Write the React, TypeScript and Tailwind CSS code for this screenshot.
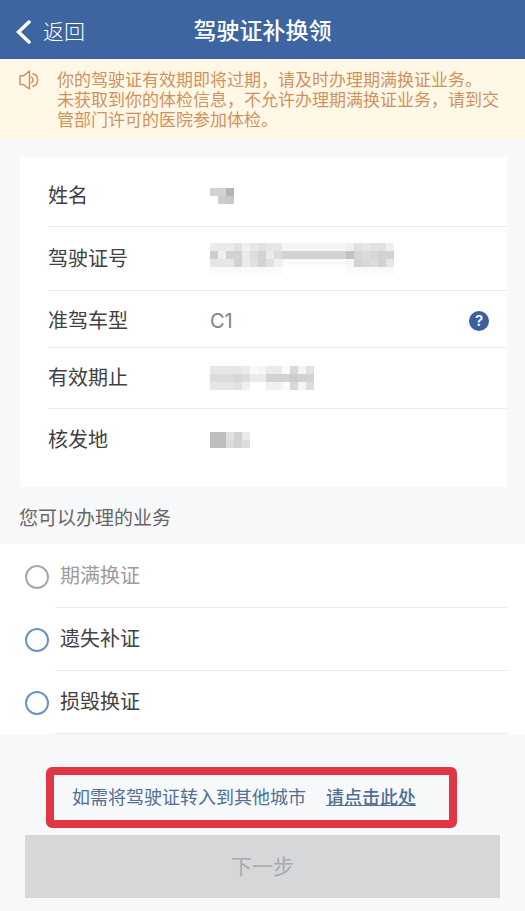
import { useState } from 'react';

type Field = {
  label: string;
  value?: string;
  mask?: string[];
  help?: boolean;
  rowClass: string;
};

type Service = {
  id: string;
  label: string;
  disabled?: boolean;
};

// each character of a mask is one mosaic cell, 0 (white) to f (darkest)
const fields: Field[] = [
  { label: '姓名', mask: ['99f', '0ab'], rowClass: 'h-[70px] pt-2 border-b' },
  {
    label: '驾驶证号',
    mask: [
      '44463565522222222365663',
      'a3994794799999999c87899',
      '55594696311111111298795',
      '11111111100000000111111'
    ],
    rowClass: 'h-16 border-b'
  },
  { label: '准驾车型', value: 'C1', help: true, rowClass: 'h-[57px] pt-1 border-b' },
  { label: '有效期止', mask: ['5555412441826', '7778744999a99', '5556300331827'], rowClass: 'h-[61px] border-b' },
  { label: '核发地', mask: ['dd694', 'dd797'], rowClass: 'h-[61px]' }
];

const services: Service[] = [
  { id: 'expired', label: '期满换证', disabled: true },
  { id: 'lost', label: '遗失补证' },
  { id: 'damaged', label: '损毁换证' }
];

const notice = `你的驾驶证有效期即将过期，请及时办理期满换证业务。
未获取到你的体检信息，不允许办理期满换证业务，请到交管部门许可的医院参加体检。`;

function MaskedValue({ rows }: { rows: string[] }) {
  const columns = rows[0].length;

  return (
    <svg
      aria-hidden="true"
      height={rows.length * 8}
      shapeRendering="crispEdges"
      viewBox={`0 0 ${columns} ${rows.length}`}
      width={columns * 8}
    >
      {rows.map((row, y) =>
        row.split('').map((cell, x) => {
          const shade = 255 - parseInt(cell, 16) * 5;
          return <rect fill={`rgb(${shade},${shade},${shade})`} height="1" key={`${x}-${y}`} width="1" x={x} y={y} />;
        })
      )}
    </svg>
  );
}

function SpeakerIcon() {
  return (
    <svg
      aria-hidden="true"
      className="h-5 w-5 shrink-0"
      fill="none"
      stroke="#cf925f"
      strokeLinejoin="round"
      strokeWidth="1.5"
      viewBox="0 0 20 20"
    >
      <path d="M1 5.8h3.5L10.5 1v18L4.5 14.600H1z" />
      <path d="M12.500 7.200c2 1.200 2 4.400 0 5.600" strokeLinecap="round" />
      <path d="M14 3.800c6.200 1.800 6.200 10.600 0 12.400" strokeLinecap="round" />
    </svg>
  );
}

export default function App() {
  const [selected, setSelected] = useState('');

  return (
    <main className="min-h-screen bg-[#f7f8fa] pb-3 font-['Inter','Noto_Sans_CJK_SC',sans-serif] text-[#414141]">
      <header className="grid h-[59px] grid-cols-[1fr_auto_1fr] items-center bg-[#3c65a2] pt-1 text-white">
        <button className="flex items-center gap-3 pl-4 text-[21px] font-light" type="button">
          <svg aria-hidden="true" className="h-6 w-[15px]" fill="none" viewBox="0 0 15 24">
            <path d="M13 2 2.500 12 13 22" stroke="currentColor" strokeLinecap="round" strokeWidth="3.500" />
          </svg>
          返回
        </button>
        <h1 className="text-[23px] font-medium">驾驶证补换领</h1>
      </header>

      <div className="flex gap-[18px] bg-[#fff8e6] pt-[11px] pr-5 pb-[10px] pl-[19px] text-[17px] leading-5 text-[#cf925f]">
        <SpeakerIcon />
        <p className="whitespace-pre-line">{notice}</p>
      </div>

      <dl className="mt-[17px] mr-[18px] ml-5 bg-white pb-[17px] pl-7">
        {fields.map((field) => (
          <div className={`flex items-center border-[#ebebed] text-xl ${field.rowClass}`} key={field.label}>
            <dt className="w-[162px] shrink-0">{field.label}</dt>
            <dd className="flex flex-1 items-center text-[#828282]">
              {field.mask && <MaskedValue rows={field.mask} />}
              {field.value}
              {field.help && (
                <button
                  aria-label="准驾车型说明"
                  className="mr-[18px] ml-auto flex h-5 w-5 items-center justify-center rounded-full bg-[#3c5fa0] text-[15px] leading-5 font-semibold text-white"
                  type="button"
                >
                  ?
                </button>
              )}
            </dd>
          </div>
        ))}
      </dl>

      <fieldset>
        <legend className="flex h-[57px] items-center px-[19px] pt-2 text-[19px] text-[#666668]">
          您可以办理的业务
        </legend>
        <div className="bg-white pt-px">
          {services.map((service) => (
            <label
              className={`flex items-center pl-[25px] text-xl ${service.disabled ? 'text-[#9c9c9c]' : ''}`}
              htmlFor={service.id}
              key={service.id}
            >
              <input
                checked={selected === service.id}
                className="h-6 w-6 shrink-0 appearance-none rounded-full border-2 border-[#6795c4] bg-white checked:border-[7px] disabled:border-[#a9a9a9]"
                disabled={service.disabled}
                id={service.id}
                name="service"
                onChange={() => setSelected(service.id)}
                type="radio"
              />
              <span className="mr-[17px] ml-1.5 flex h-[63px] flex-1 items-center border-b border-[#ebebed] pl-[5px]">
                {service.label}
              </span>
            </label>
          ))}
        </div>
      </fieldset>

      <p className="mt-[33px] mr-[68px] ml-[46px] flex h-[61px] items-center gap-5 rounded-md border-8 border-[#e13745] pl-[18px] text-lg text-[#4e7094]">
        如需将驾驶证转入到其他城市
        <a className="font-medium underline" href="#transfer">
          请点击此处
        </a>
      </p>

      <div className="mt-[7px] px-[25px]">
        <button className="h-[63px] w-full bg-[#d5d7d9] text-[21px] text-[#a9abad]" disabled={!selected} type="button">
          下一步
        </button>
      </div>
    </main>
  );
}
